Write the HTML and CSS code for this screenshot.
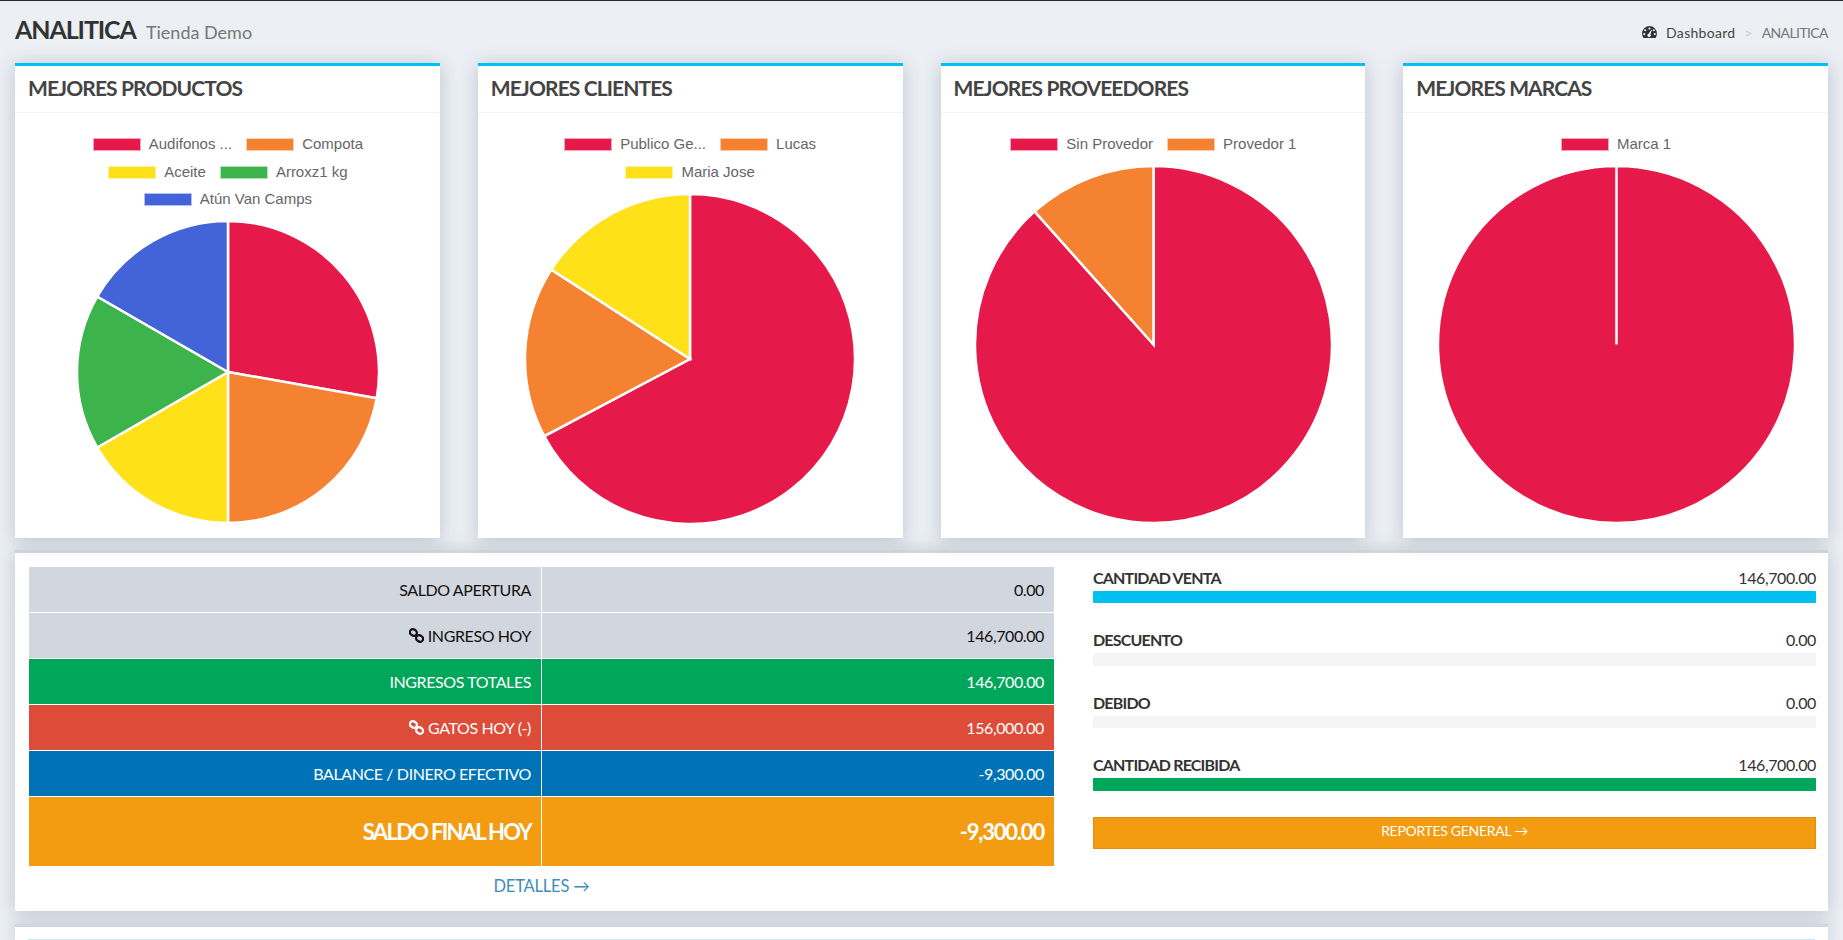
FILE: index.html
```html
<!DOCTYPE html>
<html lang="es">
<head>
    <meta charset="UTF-8">
    <title>Analitica - Tienda Demo</title>
    <link rel="stylesheet" href="styles.css">
</head>
<body>

    <svg class="icon-defs" width="0" height="0">
        <symbol id="chain" viewBox="0 0 16 16">
            <g fill="none" stroke="currentColor" stroke-width="2.4">
                <rect x="0.9" y="1.6" width="7.6" height="6.4" rx="3.2" transform="rotate(35 4.7 4.8)"/>
                <rect x="7.5" y="8" width="7.6" height="6.4" rx="3.2" transform="rotate(35 11.3 11.2)"/>
            </g>
        </symbol>
    </svg>

    <header class="page-head">
        <h1>ANALITICA <small>Tienda Demo</small></h1>
        <ol class="breadcrumb">
            <li class="home">
                <svg class="gauge" viewBox="0 0 16 13">
                    <path fill-rule="evenodd" d="M8 0a8 8 0 0 1 8 8c0 2-.6 3.600-1.500 5H1.500C.6 11.600 0 10 0 8a8 8 0 0 1 8-8zM8 1.500a1.200 1.200 0 1 0 0 2.400 1.200 1.200 0 0 0 0-2.400zM3.400 3.400a1.200 1.200 0 1 0 0 2.400 1.200 1.200 0 0 0 0-2.400zM12.600 3.400a1.200 1.200 0 1 0 0 2.400 1.200 1.200 0 0 0 0-2.400zM2.300 7.500a1.200 1.200 0 1 0 0 2.400 1.200 1.200 0 0 0 0-2.400zM13.700 7.500a1.200 1.200 0 1 0 0 2.400 1.200 1.200 0 0 0 0-2.400zM9.800 4.200L7 8.300a1.900 1.900 0 1 0 2 .6l1.600-4.500z"/>
                </svg>
                Dashboard
            </li>
            <li class="sep">&gt;</li>
            <li class="active">ANALITICA</li>
        </ol>
    </header>

    <section class="charts">
        <div class="box">
            <div class="box-header">MEJORES PRODUCTOS</div>
            <div class="box-body">
                <div class="legend">
                    <div class="legend-row">
                        <span class="key red"></span><span class="name">Audifonos ...</span>
                        <span class="key orange"></span><span class="name">Compota</span>
                    </div>
                    <div class="legend-row">
                        <span class="key yellow"></span><span class="name">Aceite</span>
                        <span class="key green"></span><span class="name">Arroxz1 kg</span>
                    </div>
                    <div class="legend-row">
                        <span class="key blue"></span><span class="name">Atún Van Camps</span>
                    </div>
                </div>
                <svg class="pie" width="306" height="306" viewBox="-153 -153 306 306">
                    <path class="s-red" d="M0 0L0 -151A151 151 0 0 1 148.700 26.200Z"/>
                    <path class="s-orange" d="M0 0L148.700 26.200A151 151 0 0 1 0 151Z"/>
                    <path class="s-yellow" d="M0 0L0 151A151 151 0 0 1 -130.770 75.500Z"/>
                    <path class="s-green" d="M0 0L-130.770 75.500A151 151 0 0 1 -130.770 -75.500Z"/>
                    <path class="s-blue" d="M0 0L-130.770 -75.500A151 151 0 0 1 0 -151Z"/>
                </svg>
            </div>
        </div>

        <div class="box">
            <div class="box-header">MEJORES CLIENTES</div>
            <div class="box-body">
                <div class="legend">
                    <div class="legend-row">
                        <span class="key red"></span><span class="name">Publico Ge...</span>
                        <span class="key orange"></span><span class="name">Lucas</span>
                    </div>
                    <div class="legend-row">
                        <span class="key yellow"></span><span class="name">Maria Jose</span>
                    </div>
                </div>
                <svg class="pie" width="334" height="334" viewBox="-167 -167 334 334">
                    <path class="s-red" d="M0 0L0 -165A165 165 0 1 1 -145.800 77.200Z"/>
                    <path class="s-orange" d="M0 0L-145.800 77.200A165 165 0 0 1 -138.700 -89.400Z"/>
                    <path class="s-yellow" d="M0 0L-138.700 -89.400A165 165 0 0 1 0 -165Z"/>
                </svg>
            </div>
        </div>

        <div class="box">
            <div class="box-header">MEJORES PROVEEDORES</div>
            <div class="box-body">
                <div class="legend">
                    <div class="legend-row">
                        <span class="key red"></span><span class="name">Sin Provedor</span>
                        <span class="key orange"></span><span class="name">Provedor 1</span>
                    </div>
                </div>
                <svg class="pie" width="361" height="361" viewBox="-180.500 -180.500 361 361">
                    <path class="s-red" d="M0 0L0 -178.500A178.500 178.500 0 1 1 -118.970 -133.070Z"/>
                    <path class="s-orange" d="M0 0L-118.970 -133.070A178.500 178.500 0 0 1 0 -178.500Z"/>
                </svg>
            </div>
        </div>

        <div class="box">
            <div class="box-header">MEJORES MARCAS</div>
            <div class="box-body">
                <div class="legend">
                    <div class="legend-row">
                        <span class="key red"></span><span class="name">Marca 1</span>
                    </div>
                </div>
                <svg class="pie" width="361" height="361" viewBox="-180.500 -180.500 361 361">
                    <path class="s-red" d="M0 0L0 -178.500A178.500 178.500 0 1 1 -0.010 -178.500Z"/>
                </svg>
            </div>
        </div>
    </section>

    <section class="panel summary">
        <div class="summary-left">
            <table class="cash">
                <tr class="grey"><td>SALDO APERTURA</td><td>0.00</td></tr>
                <tr class="grey"><td><svg class="chain"><use href="#chain"/></svg> INGRESO HOY</td><td>146,700.00</td></tr>
                <tr class="good"><td>INGRESOS TOTALES</td><td>146,700.00</td></tr>
                <tr class="bad"><td><svg class="chain"><use href="#chain"/></svg> GATOS HOY (-)</td><td>156,000.00</td></tr>
                <tr class="info"><td>BALANCE / DINERO EFECTIVO</td><td>-9,300.00</td></tr>
                <tr class="final"><td>SALDO FINAL HOY</td><td>-9,300.00</td></tr>
            </table>
            <a class="more" href="#">DETALLES →</a>
        </div>

        <div class="summary-right">
            <div class="stat">
                <div class="stat-line"><b>CANTIDAD VENTA</b><span>146,700.00</span></div>
                <div class="bar"><div class="fill cyan"></div></div>
            </div>
            <div class="stat">
                <div class="stat-line"><b>DESCUENTO</b><span>0.00</span></div>
                <div class="bar"></div>
            </div>
            <div class="stat">
                <div class="stat-line"><b>DEBIDO</b><span>0.00</span></div>
                <div class="bar"></div>
            </div>
            <div class="stat">
                <div class="stat-line"><b>CANTIDAD RECIBIDA</b><span>146,700.00</span></div>
                <div class="bar"><div class="fill emerald"></div></div>
            </div>
            <a class="btn-report" href="#">REPORTES GENERAL →</a>
        </div>
    </section>

    <section class="panel next">
        <div class="notice"></div>
    </section>

</body>
</html>
```

FILE: styles.css
```css
html, body {
    height: 100%;
    overflow: hidden;
}

body {
    margin: 0;
    background-color: #ecf0f5;
    border-top: 1px solid #222d32;
    box-sizing: border-box;
    font-family: Lato, "Open Sans", sans-serif;
    font-size: 16px;
    color: #333;
}

a {
    text-decoration: none;
}

.icon-defs {
    position: absolute;
}

/* header */

.page-head {
    display: flex;
    justify-content: space-between;
    align-items: center;
    height: 62px;
    padding: 0 15px;
}

h1 {
    margin: 0 0 7px;
    font-size: 25px;
    font-weight: 700;
    letter-spacing: -1.1px;
    color: #333;
}

h1 small {
    margin-left: 6px;
    font-size: 18px;
    font-weight: 400;
    letter-spacing: 0;
    color: #777;
}

.breadcrumb {
    display: flex;
    gap: 9px;
    margin: 0;
    padding: 0;
    list-style: none;
    font-size: 14px;
    color: #444;
}

.breadcrumb .home {
    letter-spacing: 0.3px;
}

.breadcrumb .sep {
    color: #ccc;
}

.breadcrumb .active {
    letter-spacing: -0.6px;
    color: #777;
}

.gauge {
    width: 15px;
    height: 12px;
    margin-right: 5px;
    fill: #333;
}

/* chart boxes */

.charts {
    display: grid;
    grid-template-columns: repeat(4, 1fr);
    gap: 38px;
    padding: 0 15px;
}

.box {
    height: 475px;
    background-color: #fff;
    border-top: 3px solid #00c0ef;
    box-sizing: border-box;
    box-shadow: 0 2px 18px rgba(40, 50, 70, 0.24);
}

.box-header {
    height: 47px;
    padding-left: 13px;
    border-bottom: 1px solid #f4f4f4;
    box-sizing: border-box;
    font-size: 21px;
    font-weight: 700;
    letter-spacing: -0.9px;
    line-height: 43px;
    color: #444;
}

.box-body {
    padding: 17px 0 0 1px;
    text-align: center;
}

.box:nth-child(2) .box-body {
    padding-left: 0;
}

.legend-row {
    display: flex;
    justify-content: center;
    align-items: center;
    height: 27.4px;
    font-family: "Liberation Sans", Arial, sans-serif;
    font-size: 15px;
    color: #666;
}

.key {
    width: 48px;
    height: 13px;
    margin: 2px 8px 0 0;
    box-sizing: border-box;
    border: 1px solid rgba(255, 255, 255, 0.6);
}

.name {
    margin-right: 14px;
}

.legend-row .name:last-child {
    margin-right: 0;
}

.red { background-color: #e6194b; }
.orange { background-color: #f58231; }
.yellow { background-color: #ffe119; }
.green { background-color: #3cb44b; }
.blue { background-color: #4363d8; }

.pie {
    display: block;
    margin: 7px auto 0;
}

.pie path {
    stroke: #fff;
    stroke-width: 2.5;
}

.s-red { fill: #e6194b; }
.s-orange { fill: #f58231; }
.s-yellow { fill: #ffe119; }
.s-green { fill: #3cb44b; }
.s-blue { fill: #4363d8; }

/* panels */

.panel {
    margin: 12px 15px 0;
    background-color: #fff;
    border-top: 3px solid #d2d6de;
    box-shadow: 0 2px 18px rgba(40, 50, 70, 0.24);
}

.summary {
    display: grid;
    grid-template-columns: 1027px 1fr;
    gap: 38px;
    height: 361px;
    padding: 13px 12px 0 13px;
    box-sizing: border-box;
}

.cash {
    width: 100%;
    border-collapse: collapse;
    table-layout: fixed;
}

.cash td {
    height: 46px;
    padding: 0 10px 1px;
    border: 1px solid #fff;
    box-sizing: border-box;
    text-align: right;
    font-size: 16px;
    letter-spacing: -0.4px;
    color: #fff;
}

.cash td:first-child {
    width: 513px;
}

.grey td {
    background-color: #d2d6de;
    color: #111;
}

.good td { background-color: #00a65a; }
.bad td { background-color: #dd4b39; }
.info td { background-color: #0073b7; }

.cash .final td {
    height: 70px;
    background-color: #f39c12;
    font-size: 22px;
    font-weight: 700;
    letter-spacing: -1.200px;
}

.cash .final td:first-child {
    letter-spacing: -1.700px;
}

.chain {
    width: 15px;
    height: 15px;
    vertical-align: -1px;
}

.more {
    display: block;
    margin-top: 9px;
    text-align: center;
    font-size: 16.500px;
    letter-spacing: -0.2px;
    color: #3c8dbc;
}

.summary-right {
    padding-top: 1px;
}

.stat {
    margin-bottom: 26px;
}

.stat-line {
    display: flex;
    justify-content: space-between;
    height: 23px;
    line-height: 21px;
    font-size: 16px;
    letter-spacing: -0.8px;
    color: #333;
}

.stat-line span {
    letter-spacing: -0.4px;
}

.bar {
    height: 12.400px;
    margin-top: 1px;
    background-color: #f5f5f5;
    border-radius: 1px;
}

.fill {
    height: 100%;
    border-radius: 1px;
}

.cyan { background-color: #00c0ef; }
.emerald { background-color: #00a65a; }

.btn-report {
    display: block;
    height: 32px;
    border: 1px solid #e08e0b;
    box-sizing: border-box;
    background-color: #f39c12;
    text-align: center;
    font-size: 14px;
    letter-spacing: -0.3px;
    line-height: 26px;
    color: #fff;
}

.next {
    height: 16px;
    margin-top: 13px;
    padding: 12px 13px 0;
    box-sizing: border-box;
}

.notice {
    height: 1px;
    background-color: #bfe9f3;
}
```
